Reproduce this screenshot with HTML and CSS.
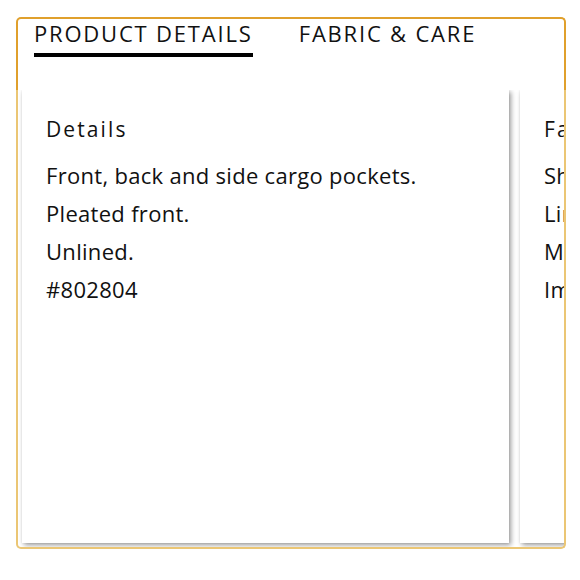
FILE: index.html
```html
<!DOCTYPE html>
<html>
<head>
<meta charset="utf-8">
<link rel="stylesheet" href="styles.css">
</head>
<body>
<div class="panel">
  <div class="tabs">
    <div class="tab active">PRODUCT DETAILS</div>
    <div class="tab">FABRIC &amp; CARE</div>
  </div>
  <div class="strip">
    <div class="card">
      <h2 class="title">Details</h2>
      <p class="line">Front, back and side cargo pockets.</p>
      <p class="line">Pleated front.</p>
      <p class="line">Unlined.</p>
      <p class="line">#802804</p>
    </div>
    <div class="card">
      <h2 class="title">Fabric &amp; Care</h2>
      <p class="line">Shell: 100% cotton.</p>
      <p class="line">Lining: 100% polyester.</p>
      <p class="line">Machine wash.</p>
      <p class="line">Imported.</p>
    </div>
  </div>
</div>
</body>
</html>
```
FILE: styles.css
```css
* { box-sizing: border-box; }
html, body { margin: 0; padding: 0; background: #fff; }
body {
  font-family: "Open Sans", "Noto Sans", sans-serif;
  color: #111;
  padding: 17px 0 0 16px;
}
.panel {
  width: 550px;
  height: 532px;
  display: flex;
  flex-direction: column;
}
.tabs {
  height: 73px;
  border: 2px solid #e0a02c;
  border-bottom: none;
  border-radius: 5px 5px 0 0;
  display: flex;
  gap: 48px;
  padding: 0 0 0 16px;
}
.tab {
  font-size: 22px;
  letter-spacing: 1.8px;
  line-height: 28px;
  height: 38px;
  padding-top: 0;
}
.tab.active {
  border-bottom: 4px solid #000;
  margin-right: -1.8px;
}
.strip {
  flex: 1;
  border: 2px solid #ebc674;
  border-top: none;
  border-radius: 0 0 5px 5px;
  display: flex;
  gap: 11px;
  padding: 0 0 4px 4px;
  overflow: hidden;
}
.card {
  flex: 0 0 487px;
  background: #fff;
  box-shadow: 2px 2px 5px rgba(0, 0, 0, 0.4), 0 0 2px rgba(0,0,0,0.08);
  padding: 24px 24px;
}
.title {
  margin: 0 0 12px;
  font-size: 21px;
  font-weight: 400;
  letter-spacing: 2.1px;
  line-height: 30px;
}
.line {
  margin: 0;
  font-size: 22px;
  letter-spacing: 0.3px;
  line-height: 38px;
}
```
